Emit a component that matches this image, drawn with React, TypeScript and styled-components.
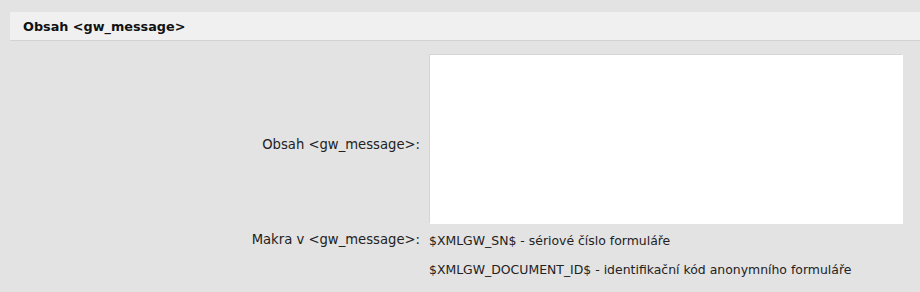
import styled, { createGlobalStyle } from 'styled-components'

const GlobalStyle = createGlobalStyle`
  html, body {
    margin: 0;
    padding: 0;
    background: #e3e3e3;
  }
  body {
    font-family: "DejaVu Sans", Verdana, sans-serif;
    font-size: 13px;
    color: #1a1a1a;
  }
`

const Page = styled.div`
  width: 920px;
  height: 292px;
  padding: 12px 0 0 10px;
  box-sizing: border-box;
  overflow: hidden;
`

const SectionHeader = styled.div`
  height: 28px;
  background: #f0f0f0;
  border-bottom: 1px solid #d2d2d2;
  display: flex;
  align-items: center;
  padding-left: 13px;
  font-weight: bold;
  font-size: 12.8px;
  color: #111;
`

const Form = styled.div`
  display: grid;
  grid-template-columns: 419px 475px;
  margin-top: 13px;
`

const Label = styled.div<{ $top?: boolean }>`
  display: flex;
  justify-content: flex-end;
  align-items: ${p => (p.$top ? 'flex-start' : 'center')};
  padding-right: 9px;
  padding-top: ${p => (p.$top ? '8px' : '10px')};
  box-sizing: border-box;
  font-size: 13.2px;
  color: #222;
`

const TextArea = styled.textarea`
  width: 474px;
  height: 170px;
  box-sizing: border-box;
  border: 1px solid #d6d6d6;
  border-right-color: #fff;
  border-bottom-color: #fff;
  background: #fff;
  resize: none;
  outline: none;
  margin: 0;
  display: block;
`

const Macros = styled.div`
  display: flex;
  flex-direction: column;
  gap: 14px;
  padding-top: 9px;
  font-size: 12.45px;
  color: #222;
`

const Macro = styled.div`
  white-space: nowrap;
`

export default function App() {
  return (
    <>
      <GlobalStyle />
      <Page>
        <SectionHeader>Obsah &lt;gw_message&gt;</SectionHeader>
        <Form>
          <Label>Obsah &lt;gw_message&gt;:</Label>
          <TextArea />
          <Label $top>Makra v &lt;gw_message&gt;:</Label>
          <Macros>
            <Macro>$XMLGW_SN$ - sériové číslo formuláře</Macro>
            <Macro>$XMLGW_DOCUMENT_ID$ - identifikační kód anonymního formuláře</Macro>
          </Macros>
        </Form>
      </Page>
    </>
  )
}
